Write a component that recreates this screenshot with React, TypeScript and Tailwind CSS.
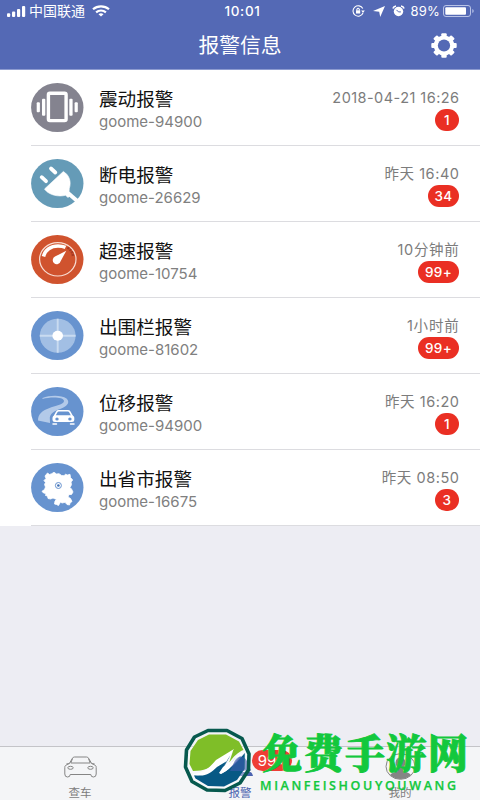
import type { ReactNode } from "react";

type Alarm = {
  id: number;
  title: string;
  device: string;
  time: string;
  timeSpacing: string;
  count: string;
  badgeWidth: string;
  icon: ReactNode;
};

const VibrateIcon = () => (
  <svg width="53" height="49" viewBox="0 0 53 49">
    <ellipse cx="26.3" cy="24.5" rx="26.2" ry="24.5" fill="#84838f" />
    <rect x="17.4" y="10.2" width="17.7" height="27.4" rx="1.5" fill="none" stroke="#fff" strokeWidth="3.4" />
    <g fill="#fff">
      <rect x="11" y="15.7" width="3.3" height="17" rx="1" />
      <rect x="5.7" y="19.3" width="3.2" height="10" rx="1" />
      <rect x="38.3" y="15.7" width="3.3" height="17" rx="1" />
      <rect x="43.6" y="19.3" width="3.2" height="10" rx="1" />
    </g>
  </svg>
);

const PlugIcon = () => (
  <svg width="53" height="49" viewBox="0 0 53 49">
    <ellipse cx="26.3" cy="24.5" rx="26.2" ry="24.5" fill="#659bb7" />
    <g stroke="#fff" strokeLinecap="round" fill="none">
      <path d="M20 9.500l4.300 4M10.700 18.200l4.300 4" strokeWidth="3.800" />
      <path d="M37 34l9.500 8.300" strokeWidth="4" strokeLinecap="butt" />
    </g>
    <path
      d="M32.300 12.500C38.500 16 40.500 23 38.300 29.500L38 33 40.500 35.500 37 38.500 34.500 36.300C28 38 18 36.500 13.500 30z"
      fill="#fff"
      stroke="#fff"
      strokeWidth=".6"
      strokeLinejoin="round"
    />
  </svg>
);

const SpeedIcon = () => (
  <svg width="53" height="49" viewBox="0 0 53 49">
    <ellipse cx="26.3" cy="24.5" rx="26.2" ry="24.5" fill="#d0532e" />
    <ellipse cx="26.8" cy="24.3" rx="18.2" ry="16.7" fill="none" stroke="#f8ddd3" strokeWidth="1.2" />
    <path d="M12.500 21.500C14 14.800 20 11 27 11c3 0 5.500.5 7.500 1.400" fill="none" stroke="#fff" strokeWidth="3.600" />
    <path d="M36.500 12.500c3 2 5 4.800 5.500 8.500" fill="none" stroke="#a83a24" strokeWidth="2.500" strokeDasharray="2 .8" />
    <path d="M35.300 15.700L29.600 26.200a4 4 0 1 1-5.600-4.600z" fill="#fff" />
  </svg>
);

const FenceIcon = () => (
  <svg width="53" height="49" viewBox="0 0 53 49">
    <ellipse cx="26.3" cy="24.5" rx="26.2" ry="24.5" fill="#6793cf" />
    <ellipse cx="26.7" cy="24.8" rx="17.9" ry="17" fill="#a2bfe4" />
    <path d="M26.700 7.800v34M8.800 24.800h35.800" stroke="#c9dbf0" strokeWidth="1.900" />
    <ellipse cx="26.700" cy="24.800" rx="5.300" ry="5" fill="#fff" />
  </svg>
);

const MoveIcon = () => (
  <svg width="53" height="49" viewBox="0 0 53 49">
    <ellipse cx="26.3" cy="24.5" rx="26.2" ry="24.5" fill="#6793cf" />
    <path
      d="M11.500 11C19 8 30.500 8 35.500 11.500c3.500 3 1.500 7-3.500 9.200-6 2.500-12.500 4.300-13.200 9.800l.2 5.500L7 33.500C7 27 11 23.800 18 21.200c6-2.300 15-3.700 15-7.200C33 10 20 9.500 11.500 12z"
      fill="#b3cae9"
    />
    <path
      d="M25.500 29.300l2.500-4.500q.6-1 2-1h9q1.400 0 2 1l2.500 4.500z"
      fill="#6793cf"
      stroke="#fff"
      strokeWidth="1.600"
      strokeLinejoin="round"
      transform="translate(-2.200 0)"
    />
    <rect x="21.500" y="28.500" width="21.800" height="6.600" rx="2.500" fill="#fff" />
    <ellipse cx="26" cy="31.900" rx="1.700" ry="1.500" fill="#6793cf" />
    <ellipse cx="38.900" cy="31.900" rx="1.700" ry="1.500" fill="#6793cf" />
    <path d="M22 37h3.500M39.500 37h3.500" stroke="#fff" strokeWidth="1.500" strokeLinecap="round" />
  </svg>
);

const ProvinceIcon = () => (
  <svg width="53" height="49" viewBox="0 0 53 49">
    <ellipse cx="26.3" cy="24.5" rx="26.2" ry="24.500" fill="#6793cf" />
    <path
      d="M14 13L16.500 10 18.500 11.500 20.700 10.700 23 9.300 25.500 11 28 10.700 30.700 12.500 33 12.700 34.500 11.300 36.500 12 39 11.300 39.500 14.500 41.700 17 40 19 40.500 21.700 39 24.500 40.500 26 42 29 40.500 31.500 38 31.500 37 34 39.500 35.500 41 38.500 39 40 38.500 42 36 41.500 34 39.300 31 40 29.500 39 27.500 42.500 25.500 41.500 23.500 41 24 38 25.500 36.500 22 35 19.500 36 17 35.500 16.500 33 14.500 32.500 15 30.500 12.500 30 11 28.300 13.500 26.500 14.500 24 13.500 21.500 14.500 19.500 13 17.500 15 15.500z"
      fill="#fff"
      stroke="#fff"
      strokeWidth=".8"
      strokeLinejoin="round"
    />
    <circle cx="27.400" cy="22.500" r="3" fill="none" stroke="#6793cf" strokeWidth="1" />
    <circle cx="27.400" cy="22.500" r="1.300" fill="#3f70b5" />
  </svg>
);

const alarms: Alarm[] = [
  { id: 1, title: "震动报警", device: "goome-94900", time: "2018-04-21 16:26", timeSpacing: "tracking-[0.45px]", count: "1", badgeWidth: "w-[24px]", icon: <VibrateIcon /> },
  { id: 2, title: "断电报警", device: "goome-26629", time: "昨天 16:40", timeSpacing: "tracking-[0.55px]", count: "34", badgeWidth: "w-[31px]", icon: <PlugIcon /> },
  { id: 3, title: "超速报警", device: "goome-10754", time: "10分钟前", timeSpacing: "tracking-[0.7px]", count: "99+", badgeWidth: "w-[41px]", icon: <SpeedIcon /> },
  { id: 4, title: "出围栏报警", device: "goome-81602", time: "1小时前", timeSpacing: "tracking-[0.8px]", count: "99+", badgeWidth: "w-[41px]", icon: <FenceIcon /> },
  { id: 5, title: "位移报警", device: "goome-94900", time: "昨天 16:20", timeSpacing: "tracking-[0.55px]", count: "1", badgeWidth: "w-[24px]", icon: <MoveIcon /> },
  { id: 6, title: "出省市报警", device: "goome-16675", time: "昨天 08:50", timeSpacing: "tracking-[0.55px]", count: "3", badgeWidth: "w-[24px]", icon: <ProvinceIcon /> },
];

const StatusBar = () => (
  <div className="grid h-[22px] grid-cols-3 items-center text-[13.5px] leading-[22px]">
    <div className="flex items-center pl-[7px]">
      <svg width="19" height="11" viewBox="0 0 19 11" fill="#fff">
        <rect x="0" y="7.200" width="3.200" height="3.800" rx="1" />
        <rect x="5" y="5.500" width="3.200" height="5.500" rx="1" />
        <rect x="10" y="3" width="3.200" height="8" rx="1" />
        <rect x="15" y="0" width="3.200" height="11" rx="1" />
      </svg>
      <span className="ml-[3px] text-[14px]">中国联通</span>
      <svg className="ml-[7px]" width="18" height="12" viewBox="0 0 18 12" fill="none" stroke="#fff" strokeWidth="2.200">
        <path d="M1 4.300c4.500-4 11.500-4 16 0M4.100 7.300c2.800-2.400 7-2.400 9.800 0" />
        <path d="M6.500 9.200c1.500-1.200 3.500-1.200 5 0L9 11.600z" fill="#fff" stroke="none" />
      </svg>
    </div>
    <div className="pl-[5px] text-center text-[13.5px] font-medium tracking-[0.7px]">10:01</div>
    <div className="flex items-center justify-end pr-[6px]">
      <svg width="13" height="12" viewBox="0 0 13 12" fill="none" stroke="#fff" strokeWidth="1.100">
        <path d="M10.800 3.500A5.200 5.200 0 1 0 11 8" />
        <path d="M9.200 5.600h3.600L11 8z" fill="#fff" stroke="none" />
        <rect x="4" y="5.300" width="4.200" height="3.200" fill="#fff" stroke="none" />
        <path d="M4.900 5.500V4.200q1.200-1.800 2.400 0v1.300" />
      </svg>
      <svg className="ml-[8px]" width="12" height="11" viewBox="0 0 12 11">
        <path d="M12 0L7.200 11 6.200 5.700 0 5z" fill="#fff" />
      </svg>
      <svg className="ml-[7px]" width="13" height="12" viewBox="0 0 13 12">
        <circle cx="6.500" cy="6.500" r="4.700" fill="#fff" />
        <path d="M.9 3.500Q1.500 1.200 4 .9M12.100 3.500Q11.500 1.200 9 .9" stroke="#fff" strokeWidth="1.500" fill="none" />
        <path d="M4.500 4.900l2 2h2.400" stroke="#5469b5" strokeWidth="1" fill="none" />
      </svg>
      <span className="ml-[6px] text-[13px] tracking-[0.2px]">89%</span>
      <svg className="ml-[3px]" width="31" height="12" viewBox="0 0 31 12">
        <rect x=".5" y=".5" width="27" height="11" rx="2.500" fill="none" stroke="#b9c3e6" />
        <rect x="2.300" y="2.200" width="20.700" height="7.600" rx="1" fill="#fff" />
        <path d="M29.300 4v4q1.400-.6 1.400-2t-1.400-2z" fill="#b9c3e6" />
      </svg>
    </div>
  </div>
);

const GearIcon = () => (
  <svg width="26" height="25" viewBox="0 0 26 25">
    <g fill="#fff" transform="translate(13 12.500) scale(1.040 1)">
      <rect x="-2.600" y="-12.200" width="5.200" height="24.400" rx="1" />
      <rect x="-2.600" y="-12.200" width="5.200" height="24.400" rx="1" transform="rotate(45)" />
      <rect x="-2.600" y="-12.200" width="5.200" height="24.400" rx="1" transform="rotate(90)" />
      <rect x="-2.600" y="-12.200" width="5.200" height="24.400" rx="1" transform="rotate(135)" />
      <circle r="9.900" />
      <circle r="5.900" fill="#5469b5" />
    </g>
  </svg>
);

const AlarmRow = ({ item }: { item: Alarm }) => (
  <div className="ml-[31px] flex h-[76px] border-b border-[#dcdce0] pr-[21px]">
    <div className="mt-[13px] h-[49px] w-[53px] shrink-0">{item.icon}</div>
    <div className="ml-[15px] flex-1 pt-[17px]">
      <h2 className="text-[18.600px] leading-[25px] text-[#111]">{item.title}</h2>
      <p className="text-[15px] leading-[20px] text-[#808080]">{item.device}</p>
    </div>
    <div className="flex flex-col items-end pt-[17px]">
      <span className={`-mr-[0.5px] text-[14.500px] leading-[21px] whitespace-nowrap text-[#7c7c7c] ${item.timeSpacing}`}>
        {item.time}
      </span>
      <span
        className={`mt-[1px] flex h-[22px] items-center justify-center rounded-full bg-[#ea2f23] text-[13.500px] font-medium tracking-[0.3px] text-white ${item.badgeWidth}`}
      >
        {item.count}
      </span>
    </div>
  </div>
);

const TabBar = () => (
  <nav className="relative grid h-[54px] grid-cols-3 border-t border-[#c4c4c8] bg-[#f4f5f7] text-[11.500px] leading-[14px] text-[#7d7d7d]">
    <div className="flex flex-col items-center pt-[9px]">
      <svg width="33" height="22" viewBox="0 0 33 22" fill="none" stroke="#858585" strokeWidth="1">
        <path d="M5 8L8.500 2.200Q9 1 10.500 1h12q1.500 0 2 1.200L28 8M8.500 2.500L6.800 7h19.400L24.500 2.500" />
        <path d="M5 7.500L1.500 9.500Q.8 10 .8 11.500V18q0 3 2.700 3t2.700-2.500h20.600q0 2.500 2.700 2.500t2.700-3v-6.500q0-1.500-.7-2L28 7.500M2.500 7.800h2.300M28.200 7.800h2.300" />
        <ellipse cx="6.500" cy="11.800" rx="2.700" ry="1.500" />
        <ellipse cx="26.500" cy="11.800" rx="2.700" ry="1.500" />
      </svg>
      <span className="mt-[8px]">查车</span>
    </div>
    <div className="flex flex-col items-center pt-[9px] text-[#4b63b0]">
      <svg width="28" height="22" viewBox="0 0 28 22" fill="#4b63b0">
        <path d="M2 14.500L5.500 9q2-8.500 8.500-8.500T22.500 9l2.500 5.500zM1 20q1-4 3-4h20q2 0 3 4z" />
      </svg>
      <span className="mt-[8px]">报警</span>
    </div>
    <div className="flex flex-col items-center pt-[6px]">
      <svg width="31" height="27" viewBox="0 0 31 27">
        <ellipse cx="15.500" cy="13.500" rx="14.500" ry="12.800" fill="#f4f5f7" stroke="#858585" />
        <ellipse cx="15.500" cy="9.700" rx="5" ry="5.500" fill="#858585" />
        <path d="M13 14h5v4q6 1.500 8 4-4.500 4-10.500 4T5 22q2-2.500 8-4z" fill="#858585" />
      </svg>
      <span className="mt-[6px]">我的</span>
    </div>
    <span className="absolute top-[3px] left-[252px] flex h-[21px] w-[40px] items-center justify-center rounded-full bg-[#ef3d35] text-[15px] text-white">
      99+
    </span>
  </nav>
);

// Site stamp that floats over the tab bar, the bar shows through the logo's gaps
const SiteStamp = () => (
  <svg className="pointer-events-none absolute bottom-0 left-[180px]" width="300" height="80" viewBox="180 720 300 80">
    <path
      d="M208 730.500L227 730.500 242 738.500 249 754 248.500 770 240 783 225 790.500 207 790 192 781.500 185.500 767 186.500 750 194.500 737z"
      fill="#fff"
      fillOpacity=".35"
    />
    <path
      d="M209 734.500L226 734.500 239 741.500 243.500 750C238 752 234 756 229 763L233 751 216 762C211 768 204 771 193 771L189.500 764 190.500 751 198 740z"
      fill="#7fbe28"
    />
    <path
      d="M244.800 753L244.500 769 237 780 224 786.500 208 786 195.500 778.500 194 775.500C205 775 212 771 218 765L230 756 220 774C229 771 239 760 244.800 753z"
      fill="#075985"
    />
    <path
      d="M192 774C204 774 210 767 216 760L234 749 228 759 223 767 231 761 228 768C233 760 238 754 244.500 751.500C237 758 233 768 221 774L219 773 227 761 217 767C210 774 203 778 192 774z"
      fill="#fff"
    />
    <path
      d="M208 730.500L227 730.500 242 738.500 249 754 248.500 770 240 783 225 790.500 207 790 192 781.500 185.500 767 186.500 750 194.500 737z"
      fill="none"
      stroke="#07594e"
      strokeWidth="3.600"
      strokeLinejoin="round"
    />
    <path d="M230 771l3-6q2-7 7-8.500l4 1v13.500z" fill="#3d5cae" fillOpacity=".6" />
    <text
      x="262"
      y="767.500"
      fontSize="40"
      fontWeight="900"
      fill="#13c83d"
      stroke="#13c83d"
      strokeWidth=".9"
      textLength="206"
      fontFamily="'Noto Serif CJK SC','Noto Sans CJK SC',serif"
    >
      免费手游网
    </text>
    <text x="260" y="790" fontSize="12.500" fontWeight="600" fill="#13c83d" stroke="#13c83d" strokeWidth=".25" textLength="196" fontFamily="'Open Sans',sans-serif">
      MIANFEISHOUYOUWANG
    </text>
  </svg>
);

const App = () => {
  return (
    <div className="relative flex h-[800px] w-[480px] flex-col overflow-hidden bg-[#ededf3] font-['Inter','Noto_Sans_CJK_SC',sans-serif]">
      <header className="h-[70px] border-b border-[#8d9bd0] bg-[#5469b5] text-white">
        <StatusBar />
        <div className="grid h-[46px] grid-cols-[1fr_auto_1fr] items-center">
          <h1 className="col-start-2 pt-[2px] text-[20.800px] leading-[30px]">报警信息</h1>
          <div className="flex justify-end pr-[23px]">
            <GearIcon />
          </div>
        </div>
      </header>

      <main className="flex-1">
        <div className="bg-white">
          {alarms.map((item) => (
            <AlarmRow key={item.id} item={item} />
          ))}
        </div>
      </main>

      <TabBar />
      <SiteStamp />
    </div>
  );
};

export default App;
